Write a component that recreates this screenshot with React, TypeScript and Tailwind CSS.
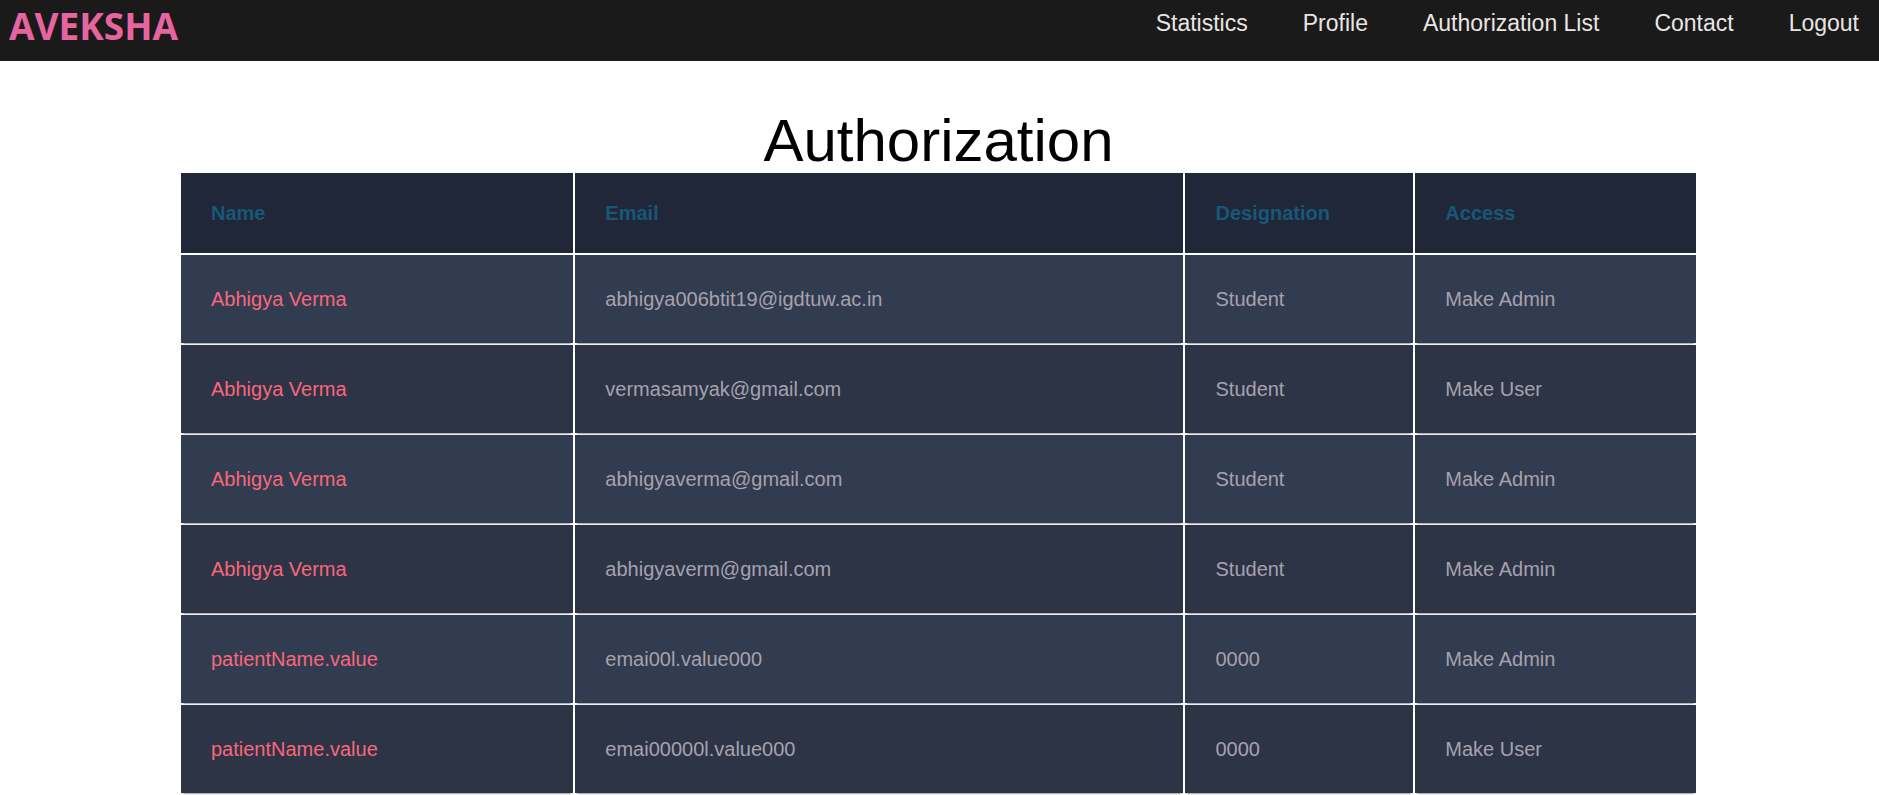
const NAV_LINKS = ['Statistics', 'Profile', 'Authorization List', 'Contact', 'Logout'];

type User = {
  name: string;
  email: string;
  designation: string;
  access: string;
};

const USERS: User[] = [
  { name: 'Abhigya Verma', email: 'abhigya006btit19@igdtuw.ac.in', designation: 'Student', access: 'Make Admin' },
  { name: 'Abhigya Verma', email: 'vermasamyak@gmail.com', designation: 'Student', access: 'Make User' },
  { name: 'Abhigya Verma', email: 'abhigyaverma@gmail.com', designation: 'Student', access: 'Make Admin' },
  { name: 'Abhigya Verma', email: 'abhigyaverm@gmail.com', designation: 'Student', access: 'Make Admin' },
  { name: 'patientName.value', email: 'emai00l.value000', designation: '0000', access: 'Make Admin' },
  { name: 'patientName.value', email: 'emai00000l.value000', designation: '0000', access: 'Make User' },
];

const TH = 'px-[30px] py-7 text-left font-bold';
const TD = 'px-[30px] py-8 shadow-[0_2px_2px_-2px_#0e1119]';

function Navbar() {
  return (
    <nav className="flex items-start justify-between bg-[#1a1a1a] h-[61px] pl-[9px] pr-5">
      <a
        href="#"
        className="font-['Comic_Sans_MS','Open_Sans',sans-serif] text-[37px] leading-[52px] font-bold text-[#e6649f]"
      >
        AVEKSHA
      </a>
      <ul className="flex gap-[55px] pt-[11px]">
        {NAV_LINKS.map((label) => (
          <li key={label}>
            <a href="#" className="block text-[23px] leading-6 text-[#e8e6e3] hover:text-white">
              {label}
            </a>
          </li>
        ))}
      </ul>
    </nav>
  );
}

export default function App() {
  return (
    <div className="bg-white font-['Liberation_Sans',Arial,sans-serif] text-black">
      <Navbar />

      <main className="pl-[179px] pr-[181px] pt-[50px]">
        <h1 className="text-center text-[60px] leading-[60px]">Authorization</h1>

        {/* Users */}
        <table className="w-full table-fixed border-separate border-spacing-[2px] text-[20px] leading-6 text-[#a7a1ae]">
          <colgroup>
            <col className="w-[26%]" />
            <col />
            <col className="w-[15.1%]" />
            <col className="w-[18.6%]" />
          </colgroup>
          <thead>
            <tr className="bg-[#1f2739] text-[#185875]">
              <th className={TH}>Name</th>
              <th className={TH}>Email</th>
              <th className={TH}>Designation</th>
              <th className={TH}>Access</th>
            </tr>
          </thead>
          <tbody>
            {USERS.map((user) => (
              <tr key={user.email} className="bg-[#323c50] even:bg-[#2c3446]">
                <td className={`${TD} text-[#fb667a]`}>{user.name}</td>
                <td className={TD}>{user.email}</td>
                <td className={TD}>{user.designation}</td>
                <td className={TD}>
                  <button type="button" className="block cursor-pointer">{user.access}</button>
                </td>
              </tr>
            ))}
          </tbody>
        </table>
      </main>
    </div>
  );
}
